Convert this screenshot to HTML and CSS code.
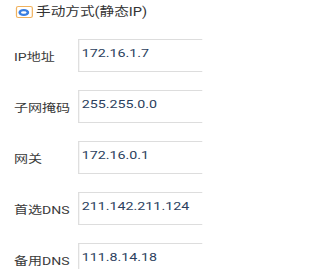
FILE: index.html
```html
<!DOCTYPE html>
<html lang="zh-CN">
<head>
<meta charset="utf-8">
<link rel="stylesheet" href="styles.css">
</head>
<body>
<div class="page">
  <div class="title">
    <span class="radio"><span class="dot"></span></span>
    <span class="title-text">手动方式(静态IP)</span>
  </div>
  <div class="form">
    <div class="row"><div class="label">IP地址</div><div class="field">172.16.1.7</div></div>
    <div class="row"><div class="label">子网掩码</div><div class="field">255.255.0.0</div></div>
    <div class="row"><div class="label">网关</div><div class="field">172.16.0.1</div></div>
    <div class="row"><div class="label">首选DNS</div><div class="field">211.142.211.124</div></div>
    <div class="row"><div class="label">备用DNS</div><div class="field">111.8.14.18</div></div>
  </div>
</div>
</body>
</html>
```
FILE: styles.css
```css
html, body {
  margin: 0;
  padding: 0;
  background: #ffffff;
  overflow: hidden;
}
.page {
  width: 166.3px;
  height: 269px;
  overflow: hidden;
  font-family: Roboto, "Noto Sans CJK SC", sans-serif;
  transform: scaleX(1.22);
  transform-origin: 0 0;
}
.title {
  display: flex;
  align-items: center;
  height: 24px;
  padding-left: 12.5px;
  gap: 3px;
}
.radio {
  flex: none;
  width: 12px;
  height: 10px;
  border: 1px solid #f0b25e;
  border-radius: 2px;
  display: flex;
  align-items: center;
  justify-content: center;
  background: #fff;
}
.dot {
  width: 9px;
  height: 7px;
  border-radius: 50%;
  background: #fff;
  box-shadow: inset 0 0 0 2.2px #3a7ee0;
}
.title-text {
  font-size: 12px;
  color: #333333;
  line-height: 16px;
  white-space: nowrap;
}
.form {
  display: flex;
  flex-direction: column;
  gap: 18px;
  padding-top: 15px;
}
.row {
  display: flex;
  align-items: center;
  height: 33px;
}
.label {
  flex: none;
  width: 52.5px;
  padding-left: 11.5px;
  font-size: 11.5px;
  color: #3a3a3a;
  white-space: nowrap;
}
.field {
  flex: 1;
  min-width: 0;
  height: 31px;
  border: 1px solid #dddddd;
  border-right: none;
  box-sizing: content-box;
  padding-left: 2px;
  font-size: 11.7px;
  color: #2c3f5e;
  line-height: 27px;
  white-space: nowrap;
  overflow: hidden;
}
```
